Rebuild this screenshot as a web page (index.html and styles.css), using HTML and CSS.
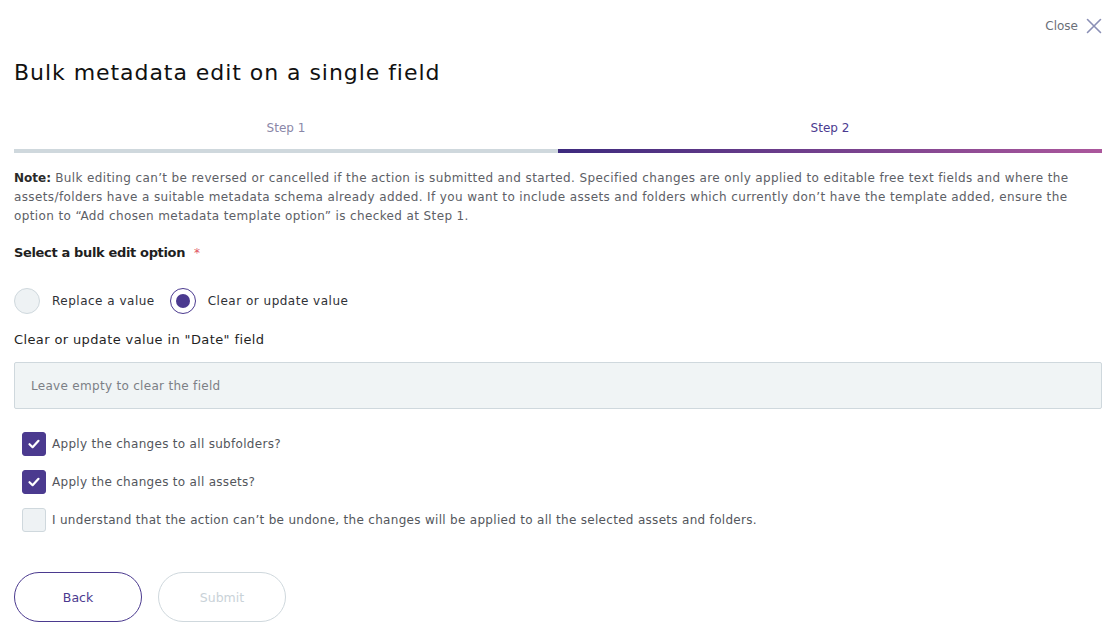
FILE: index.html
```html
<!DOCTYPE html>
<html>
<head>
<meta charset="utf-8">
<link rel="stylesheet" href="styles.css">
</head>
<body>
<div class="page">
  <div class="topbar">
    <span class="close-text">Close</span>
    <svg class="close-icon" width="16" height="16" viewBox="0 0 16 16"><path d="M1.5 1.5 L14.5 14.5 M14.5 1.5 L1.5 14.5" stroke="#8a8fb5" stroke-width="1.6" fill="none" stroke-linecap="round"/></svg>
  </div>
  <h1 class="title">Bulk metadata edit on a single field</h1>
  <div class="steps">
    <div class="step">
      <div class="step-label">Step 1</div>
      <div class="step-bar"></div>
    </div>
    <div class="step active">
      <div class="step-label">Step 2</div>
      <div class="step-bar"></div>
    </div>
  </div>
  <p class="note"><b>Note:</b> Bulk editing can’t be reversed or cancelled if the action is submitted and started. Specified changes are only applied to editable free text fields and where the assets/folders have a suitable metadata schema already added. If you want to include assets and folders which currently don’t have the template added, ensure the option to “Add chosen metadata template option” is checked at Step 1.</p>
  <div class="label-row"><span class="label">Select a bulk edit option</span><span class="req">*</span></div>
  <div class="radios">
    <label class="radio"><span class="radio-dot"></span><span>Replace a value</span></label>
    <label class="radio checked"><span class="radio-dot"></span><span>Clear or update value</span></label>
  </div>
  <div class="field-label">Clear or update value in "Date" field</div>
  <div class="input">Leave empty to clear the field</div>
  <div class="checks">
    <div class="check on"><span class="box"><svg width="14" height="14" viewBox="0 0 14 14"><path d="M2.5 7.2 L5.6 10.2 L11.5 3.8" stroke="#fff" stroke-width="2.2" fill="none" stroke-linecap="round" stroke-linejoin="round"/></svg></span><span>Apply the changes to all subfolders?</span></div>
    <div class="check on"><span class="box"><svg width="14" height="14" viewBox="0 0 14 14"><path d="M2.5 7.2 L5.6 10.2 L11.5 3.8" stroke="#fff" stroke-width="2.2" fill="none" stroke-linecap="round" stroke-linejoin="round"/></svg></span><span>Apply the changes to all assets?</span></div>
    <div class="check"><span class="box"></span><span>I understand that the action can’t be undone, the changes will be applied to all the selected assets and folders.</span></div>
  </div>
  <div class="buttons">
    <button class="btn back">Back</button>
    <button class="btn submit">Submit</button>
  </div>
</div>
</body>
</html>
```
FILE: styles.css
```css
* { box-sizing: border-box; }
html, body { margin: 0; padding: 0; background: #fff; }
body { font-family: "DejaVu Sans", "Open Sans", sans-serif; color: #1a1a1a; }
.page { width: 1115px; height: 632px; padding: 0 13px 0 14px; overflow: hidden; }
.topbar { display: flex; justify-content: flex-end; align-items: center; gap: 8px; height: 26px; margin-top: 13px; }
.close-text { font-size: 12px; color: #6b6f78; }
.close-icon { display: block; }
.title { font-size: 22px; font-weight: 400; margin: 20px 0 0; line-height: 28px; color: #111; letter-spacing: 0.95px; }
.steps { display: flex; margin-top: 32px; }
.step { flex: 1; text-align: center; }
.step-label { font-size: 12px; color: #8a87a8; line-height: 18px; height: 30px; }
.step.active .step-label { color: #4b3a8f; }
.step-bar { height: 4px; background: #cfd8dd; }
.step.active .step-bar { background: linear-gradient(90deg, #3d2a7e, #ab579c); }
.note { font-size: 12px; letter-spacing: 0.38px; line-height: 19px; color: #5d6066; margin: 16px 0 0; }
.note b { color: #2a2a2a; font-weight: 700; letter-spacing: 0; }
.label-row { margin-top: 17px; display: flex; align-items: flex-start; gap: 9px; height: 20px; line-height: 20px; }
.label { font-size: 13px; font-weight: 700; color: #1f1f1f; letter-spacing: -0.35px; }
.req { color: #e0545f; font-size: 12px; line-height: 14px; margin-top: 3px; }
.radios { display: flex; gap: 15px; margin-top: 25px; }
.radio { display: flex; align-items: center; gap: 12px; font-size: 12px; letter-spacing: 0.5px; color: #2f3136; }
.radio-dot { width: 26px; height: 26px; border-radius: 50%; background: #eef2f4; border: 1px solid #cfd8dd; display: flex; align-items: center; justify-content: center; }
.radio.checked .radio-dot { background: #fff; border: 1.5px solid #4b3a8f; }
.radio.checked .radio-dot::after { content: ""; width: 14px; height: 14px; border-radius: 50%; background: #4b3a8f; }
.field-label { font-size: 13px; letter-spacing: 0.38px; color: #1f1f1f; margin-top: 16px; line-height: 20px; }
.input { margin-top: 12px; height: 47px; background: #f0f4f5; border: 1px solid #cfd8dd; border-radius: 2px; padding: 0 16px; display: flex; align-items: center; font-size: 12px; letter-spacing: 0.3px; color: #7c7f85; }
.checks { margin-top: 23px; padding-left: 8px; display: flex; flex-direction: column; gap: 14px; }
.check { display: flex; align-items: center; gap: 6px; font-size: 12px; letter-spacing: 0.3px; color: #53565c; height: 24px; }
.box { width: 24px; height: 24px; border-radius: 3px; background: #eef2f4; border: 1px solid #cfd8dd; display: flex; align-items: center; justify-content: center; }
.check.on .box { background: #4b3a8f; border-color: #4b3a8f; }
.buttons { display: flex; gap: 16px; margin-top: 40px; }
.btn { width: 128px; height: 50px; border-radius: 25px; background: #fff; font-family: inherit; font-size: 12.5px; }
.btn.back { border: 1.3px solid #4b3a8f; color: #4b3a8f; }
.btn.submit { border: 1.3px solid #cfd8dd; color: #c9d2d8; }
```
